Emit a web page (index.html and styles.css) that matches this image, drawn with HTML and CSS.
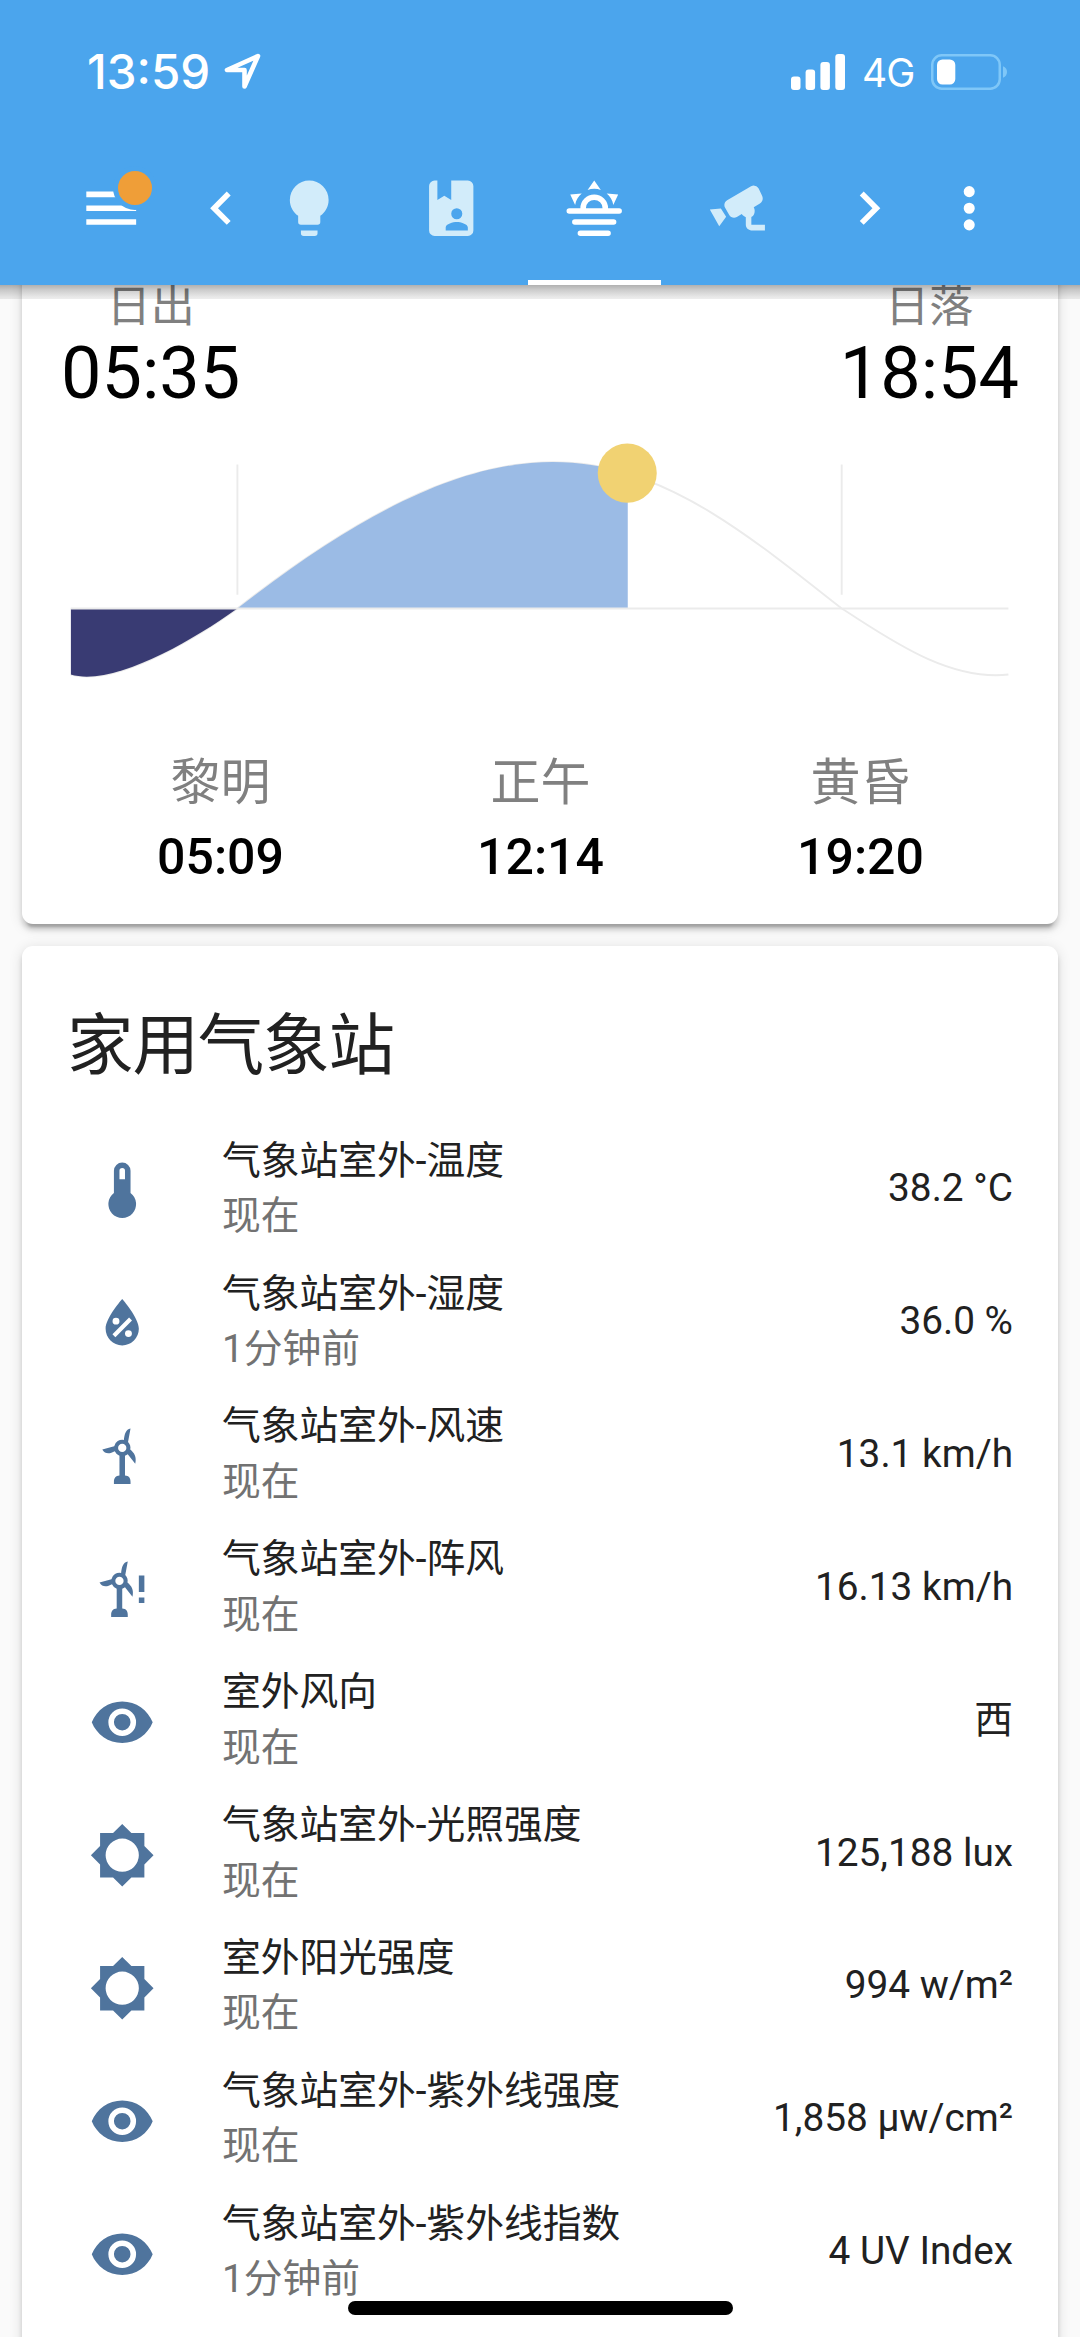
FILE: index.html
```html
<!DOCTYPE html>
<html lang="zh-CN">
<head>
<meta charset="utf-8">
<title>家用气象站</title>
<link rel="stylesheet" href="styles.css">
</head>
<body>
<svg class="sprite" aria-hidden="true">
  <symbol id="eye" viewBox="0 0 24 24"><path d="M12,9A3,3 0 0,0 9,12A3,3 0 0,0 12,15A3,3 0 0,0 15,12A3,3 0 0,0 12,9M12,17A5,5 0 0,1 7,12A5,5 0 0,1 12,7A5,5 0 0,1 17,12A5,5 0 0,1 12,17M12,4.5C7,4.5 2.73,7.61 1,12C2.73,16.39 7,19.5 12,19.5C17,19.5 21.27,16.39 23,12C21.27,7.61 17,4.5 12,4.5Z"/></symbol>
  <symbol id="brightness" viewBox="0 0 24 24"><path d="M12,18A6,6 0 0,1 6,12A6,6 0 0,1 12,6A6,6 0 0,1 18,12A6,6 0 0,1 12,18M20,15.31L23.31,12L20,8.69V4H15.31L12,0.69L8.69,4H4V8.69L0.69,12L4,15.31V20H8.69L12,23.31L15.31,20H20V15.31Z"/></symbol>
  <symbol id="turbine" viewBox="0 0 24 24"><path fill-rule="evenodd" d="M12.6,6.1C12.8,4.2 13.3,2.2 15,2L14.1,6.9A3,3 0 0,1 14.9,9.6C16.3,10.8 17.3,12.2 16.7,14.7L14,11.3A3,3 0 0,1 13,11.8V19C14.4,19 15,20 15,21.2V22H9V21.2C9,20 9.7,19 11,19V11.8A3,3 0 0,1 9.3,10.2C7.6,11.2 5.8,11.4 4.8,9.6L9.1,8.4A3,3 0 0,1 12.6,6.1M12,7.5A1.5,1.5 0 0,0 10.5,9A1.5,1.5 0 0,0 12,10.5A1.5,1.5 0 0,0 13.5,9A1.5,1.5 0 0,0 12,7.5Z"/></symbol>
</svg>

<header class="header">
  <div class="status">
    <div class="status-left">
      <span class="clock">13:59</span>
      <svg class="location" viewBox="0 0 56 56"><path d="M43 12L12 26H29.5V42.5Z"/></svg>
    </div>
    <div class="status-right">
      <svg class="signal" viewBox="0 0 55 36"><rect x="0" y="22.500" width="9.500" height="13.500" rx="3"/><rect x="14.600" y="15.500" width="9.500" height="20.500" rx="3"/><rect x="29.400" y="8" width="9.500" height="28" rx="3"/><rect x="44.300" y="0" width="9.700" height="36" rx="3"/></svg>
      <span class="network">4G</span>
      <svg class="battery" viewBox="0 0 77 36"><rect x="1.250" y="1.250" width="67.500" height="33.500" rx="9.500" fill="none" stroke="#7fc7f8" stroke-width="2.500"/><rect x="6" y="5.500" width="18.300" height="25" rx="5.500" fill="#fff"/><path d="M72 12.300Q76 14 76 18T72 23.700Z" fill="#7fc7f8"/></svg>
    </div>
  </div>
  <nav class="toolbar">
    <div class="menu">
      <svg class="icon" viewBox="0 0 24 24"><path d="M3,6H21V8H3V6M3,11H21V13H3V11M3,16H21V18H3V16Z"/></svg>
      <span class="dot"></span>
    </div>
    <svg class="icon prev" viewBox="0 0 24 24"><path d="M15.41,16.58L10.83,12L15.41,7.41L14,6L8,12L14,18L15.41,16.58Z"/></svg>
    <div class="tabs">
      <a class="tab"><svg class="icon" viewBox="0 0 24 24"><path d="M12,2A7,7 0 0,0 5,9C5,11.38 6.19,13.47 8,14.74V17A1,1 0 0,0 9,18H15A1,1 0 0,0 16,17V14.74C17.81,13.47 19,11.38 19,9A7,7 0 0,0 12,2M9,21A1,1 0 0,0 10,22H14A1,1 0 0,0 15,21V20H9V21Z"/></svg></a>
      <a class="tab"><svg class="icon" viewBox="0 0 24 24"><path fill-rule="evenodd" d="M18,2A2,2 0 0,1 20,4V20A2,2 0 0,1 18,22H6A2,2 0 0,1 4,20V4A2,2 0 0,1 6,2H7V9L9.5,7.5L12,9V2H18M14,12A2,2 0 0,0 12,14A2,2 0 0,0 14,16A2,2 0 0,0 16,14A2,2 0 0,0 14,12M18,20V19C18,17.67 15.33,17 14,17C12.67,17 10,17.67 10,19V20H18Z"/></svg></a>
      <a class="tab active"><svg class="icon" viewBox="0 0 24 24"><path d="M3,12H7A5,5 0 0,1 12,7A5,5 0 0,1 17,12H21A1,1 0 0,1 22,13A1,1 0 0,1 21,14H3A1,1 0 0,1 2,13A1,1 0 0,1 3,12M15,12A3,3 0 0,0 12,9A3,3 0 0,0 9,12H15M12,2L14.39,5.42C13.65,5.15 12.84,5 12,5C11.16,5 10.35,5.15 9.61,5.42L12,2M3.34,7L7.5,6.65C6.9,7.16 6.36,7.78 5.94,8.5C5.5,9.24 5.25,10 5.11,10.79L3.34,7M20.65,7L18.88,10.79C18.74,10 18.47,9.23 18.05,8.5C17.63,7.78 17.1,7.15 16.5,6.64L20.65,7M5,16H19A1,1 0 0,1 20,17A1,1 0 0,1 19,18H5A1,1 0 0,1 4,17A1,1 0 0,1 5,16M17,20A1,1 0 0,1 18,21A1,1 0 0,1 17,22H7A1,1 0 0,1 6,21A1,1 0 0,1 7,20H17Z"/></svg></a>
      <a class="tab"><svg class="icon" viewBox="0 0 24 24"><path d="M18.150,3.840C17.770,3.810 17.370,3.900 17,4.100L8.350,9.100C7.390,9.660 7.070,10.900 7.620,11.840L9.120,14.430C9.670,15.400 10.890,15.720 11.850,15.170L13.650,14.130C13.920,14.590 14.500,15.060 15.100,15.270V18C15.100,19.100 16,20 17.100,20H22V18H17.100V15.170C18,14.770 18.310,13.870 18.310,12.900C18.310,12.440 18.190,12.010 17.970,11.630L20.200,10.270C21.170,9.710 21.500,8.400 20.940,7.430L19.740,4.840C19.400,4.240 18.790,3.900 18.150,3.840M6.100,12.070L2.100,12.500L5.500,18.500L8,15.100Z"/></svg></a>
    </div>
    <svg class="icon next" viewBox="0 0 24 24"><path d="M8.590,16.580L13.170,12L8.590,7.410L10,6L16,12L10,18L8.590,16.580Z"/></svg>
    <svg class="icon more" viewBox="0 0 24 24"><path d="M12,16A2,2 0 0,1 14,18A2,2 0 0,1 12,20A2,2 0 0,1 10,18A2,2 0 0,1 12,16M12,10A2,2 0 0,1 14,12A2,2 0 0,1 12,14A2,2 0 0,1 10,12A2,2 0 0,1 12,10M12,4A2,2 0 0,1 14,6A2,2 0 0,1 12,8A2,2 0 0,1 10,6A2,2 0 0,1 12,4Z"/></svg>
  </nav>
  <div class="header-shadow"></div>
</header>

<main class="content">
  <section class="card sun-card">
    <div class="sun-top">
      <div class="sun-edge"><span class="edge-label">日出</span><span class="edge-time">05:35</span></div>
      <div class="sun-edge"><span class="edge-label">日落</span><span class="edge-time">18:54</span></div>
    </div>
    <svg class="sun-graph" viewBox="0 0 550 150">
      <defs>
        <clipPath id="night"><rect x="5" y="108" width="96" height="42"/></clipPath>
        <clipPath id="day"><rect x="101" y="0" width="224.800" height="108"/></clipPath>
      </defs>
      <path class="line" d="M5,146 C29,153 73,128 101,108 C276,-29 342,23 449,108 C473,123 509,150 545,146"/>
      <path fill="#393b73" clip-path="url(#night)" d="M5,108V146C29,153 73,128 101,108Z"/>
      <path fill="#9bbbe5" clip-path="url(#day)" d="M101,108C276,-29 342,23 449,108Z"/>
      <path class="line" d="M5,108H545M101,25V100M449,25V100"/>
      <circle cx="325.500" cy="30" r="17" fill="#f1d272"/>
    </svg>
    <div class="sun-bottom">
      <div class="sun-field"><span class="field-label">黎明</span><span class="field-time">05:09</span></div>
      <div class="sun-field"><span class="field-label">正午</span><span class="field-time">12:14</span></div>
      <div class="sun-field"><span class="field-label">黄昏</span><span class="field-time">19:20</span></div>
    </div>
  </section>

  <section class="card station">
    <h1 class="title">家用气象站</h1>
    <div class="row"><svg class="icon" viewBox="0 0 24 24"><path fill-rule="evenodd" d="M15,13V5A3,3 0 0,0 9,5V13A5,5 0 1,0 15,13M12,4A1,1 0 0,1 13,5V8H11V5A1,1 0 0,1 12,4Z"/></svg><div class="info"><span class="name">气象站室外-温度</span><span class="when">现在</span></div><span class="value">38.2 °C</span></div>
    <div class="row"><svg class="icon" viewBox="0 0 24 24"><path fill-rule="evenodd" d="M12,3.250C12,3.250 6,10 6,14C6,17.320 8.690,20 12,20A6,6 0 0,0 18,14C18,10 12,3.250 12,3.250M14.470,9.970L15.530,11.030L9.530,17.030L8.470,15.970M9.750,10A1.250,1.250 0 0,1 11,11.250A1.250,1.250 0 0,1 9.750,12.500A1.250,1.250 0 0,1 8.500,11.250A1.250,1.250 0 0,1 9.750,10M14.250,14.500A1.250,1.250 0 0,1 15.500,15.750A1.250,1.250 0 0,1 14.250,17A1.250,1.250 0 0,1 13,15.750A1.250,1.250 0 0,1 14.250,14.500Z"/></svg><div class="info"><span class="name">气象站室外-湿度</span><span class="when">1分钟前</span></div><span class="value">36.0 %</span></div>
    <div class="row"><svg class="icon"><use href="#turbine"/></svg><div class="info"><span class="name">气象站室外-风速</span><span class="when">现在</span></div><span class="value">13.1 km/h</span></div>
    <div class="row"><svg class="icon" viewBox="0 0 24 24"><use href="#turbine" x="-1" width="24" height="24"/><path d="M18,7H20V13H18V7M18,15H20V17H18V15Z"/></svg><div class="info"><span class="name">气象站室外-阵风</span><span class="when">现在</span></div><span class="value">16.13 km/h</span></div>
    <div class="row"><svg class="icon"><use href="#eye"/></svg><div class="info"><span class="name">室外风向</span><span class="when">现在</span></div><span class="value">西</span></div>
    <div class="row"><svg class="icon"><use href="#brightness"/></svg><div class="info"><span class="name">气象站室外-光照强度</span><span class="when">现在</span></div><span class="value">125,188 lux</span></div>
    <div class="row"><svg class="icon"><use href="#brightness"/></svg><div class="info"><span class="name">室外阳光强度</span><span class="when">现在</span></div><span class="value">994 w/m²</span></div>
    <div class="row"><svg class="icon"><use href="#eye"/></svg><div class="info"><span class="name">气象站室外-紫外线强度</span><span class="when">现在</span></div><span class="value">1,858 µw/cm²</span></div>
    <div class="row"><svg class="icon"><use href="#eye"/></svg><div class="info"><span class="name">气象站室外-紫外线指数</span><span class="when">1分钟前</span></div><span class="value">4 UV Index</span></div>
  </section>
</main>
<div class="home-indicator"></div>
</body>
</html>
```
FILE: styles.css
```css
* { box-sizing: border-box; }

body {
  margin: 0;
  width: 1080px;
  height: 2337px;
  overflow: hidden;
  position: relative;
  display: flex;
  flex-direction: column;
  background: #fafafa;
  color: #212121;
  font-family: Roboto, "Noto Sans CJK SC", sans-serif;
}

.sprite { display: none; }

.icon {
  display: block;
  flex: none;
  width: 66.46px;
  height: 66.46px;
  fill: currentColor;
}

/* Header */
.header {
  position: relative;
  z-index: 2;
  flex: none;
  height: 285px;
  background: #4ba5ed;
  color: #fff;
}

.header-shadow {
  position: absolute;
  left: 0;
  right: 0;
  top: 285px;
  height: 14px;
  background: linear-gradient(rgba(0, 0, 0, .31), rgba(0, 0, 0, .2) 35%, rgba(0, 0, 0, .09) 85%, rgba(0, 0, 0, .07));
}

.status {
  height: 131px;
  padding: 12px 72px 0 87px;
  display: flex;
  justify-content: space-between;
  align-items: center;
  font-family: Inter, sans-serif;
}

.status-left, .status-right { display: flex; align-items: center; }
.status-left { height: 56px; }
.clock { width: 128px; font-size: 47.5px; line-height: 58px; font-weight: 550; white-space: nowrap; }
.location { width: 56px; height: 56px; fill: none; stroke: #fff; stroke-width: 4.6; stroke-linejoin: round; }
.signal { width: 55px; height: 36px; fill: #fff; }
.network { width: 54px; margin: 0 15px 0 16px; font-size: 39px; line-height: 50px; white-space: nowrap; letter-spacing: -1px; padding-top: 3px; }
.battery { width: 77px; height: 36px; }

.toolbar {
  height: 154px;
  display: flex;
  align-items: center;
  padding-left: 77.8px;
}

.menu { position: relative; }
.dot {
  position: absolute;
  left: 35.7px;
  top: -8.7px;
  width: 44px;
  height: 44px;
  border: 5.5px solid #4ba5ed;
  border-radius: 50%;
  background: #ef9e38;
}
.prev { margin-left: 44.2px; }
.tabs { display: flex; align-self: stretch; margin-left: -17.2px; }
.tab {
  width: 142.6px;
  display: flex;
  align-items: center;
  justify-content: center;
  color: #d2ecfa;
}
.tab.active {
  color: #fff;
  background: linear-gradient(#fff, #fff) center bottom / 133px 5.5px no-repeat;
}
.next { margin-left: 28.2px; }
.more { margin-left: 32.8px; }

/* Cards */
.content {
  flex: none;
  margin-top: -22px;
  padding: 0 22px;
  display: flex;
  flex-direction: column;
  gap: 22px;
}

.card {
  background: #fff;
  border-radius: 11px;
  box-shadow: 0 5.5px 5.5px 0 rgba(0, 0, 0, .14), 0 2.8px 14px 0 rgba(0, 0, 0, .12), 0 8.3px 2.8px -5.5px rgba(0, 0, 0, .2);
}

.sun-card { height: 661px; padding: 20px 39px 0; }
.sun-top { display: flex; justify-content: space-between; }
.sun-edge { display: flex; flex-direction: column; align-items: center; }
.edge-label { font-size: 44px; line-height: 48px; color: #808080; }
.edge-time { font-size: 72px; line-height: 86px; color: #000; }

.sun-graph { display: block; width: 955.1px; height: 260.5px; margin: 3.7px 0 0 1.4px; }
.line { fill: none; stroke: #ebebeb; stroke-width: 1.1; }

.sun-bottom { display: grid; grid-template-columns: repeat(3, 320px); margin: 71.8px 0 0 -.5px; }
.sun-field { display: flex; flex-direction: column; align-items: center; gap: 14px; }
.field-label { font-size: 50px; line-height: 60px; color: #808080; }
.field-time { font-size: 50px; line-height: 60px; font-weight: 500; color: #000; }

.station { height: 1420px; padding: 65px 45px 0 45px; }
.title {
  margin: 0 0 40.7px;
  font-size: 66.5px;
  line-height: 70px;
  font-weight: 400;
  letter-spacing: -1.1px;
}

.row { height: 132.9px; display: flex; align-items: center; font-size: 38.77px; }
.row .icon { margin: 0 67px 0 21.5px; color: #4f749d; position: relative; top: 2.5px; }
.info { flex: 1; display: flex; flex-direction: column; }
.name, .when { line-height: 55.5px; white-space: nowrap; }
.when { color: #727272; }
.value { line-height: 56px; white-space: nowrap; }

.home-indicator {
  position: absolute;
  z-index: 3;
  left: 348px;
  top: 2301px;
  width: 385px;
  height: 14px;
  border-radius: 7px;
  background: #000;
}
```
